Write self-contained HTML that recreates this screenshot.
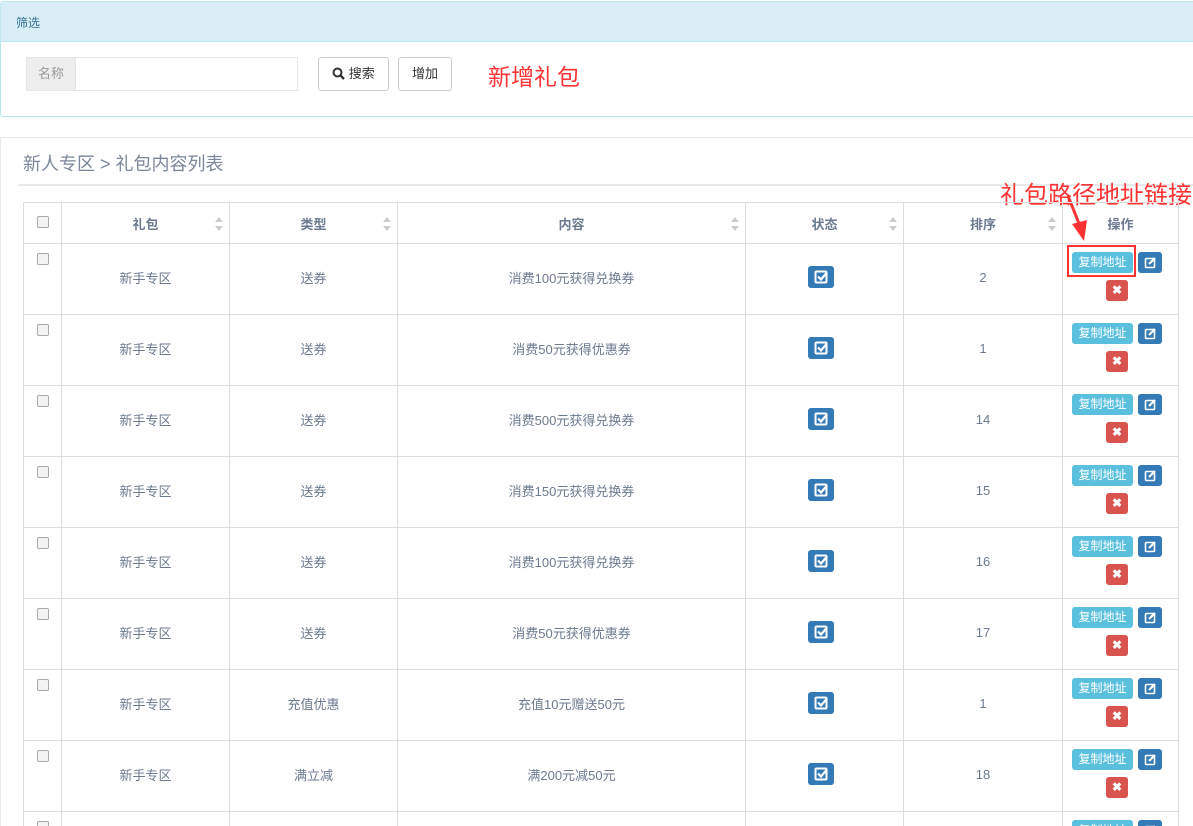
<!DOCTYPE html>
<html style="overflow:hidden;height:826px"><head><meta charset="utf-8"><style>
*{box-sizing:border-box;margin:0;padding:0}
body{width:1193px;height:826px;overflow:hidden;background:#fff;font-family:"Liberation Sans","Noto Sans CJK SC",sans-serif;font-size:13px;color:#676a6c;position:relative}
.p1{position:absolute;left:0;top:1px;width:1200px;height:116px;border:1px solid #bce8f1;border-radius:3px}
.p1 .h{height:40px;background:#d9edf7;border-bottom:1px solid #bce8f1;color:#31708f;font-size:12px;padding:12px 15px}
.grp{position:absolute;left:26px;top:57px;width:272px;height:34px;border:1px solid #e5e6e7;display:flex}
.grp span{width:49px;background:#eee;color:#999;font-size:13px;line-height:32px;text-align:center;border-right:1px solid #e5e6e7}
.btn{position:absolute;top:57px;height:34px;border:1px solid #ccc;border-radius:3px;background:#fff;color:#333;font-size:13px;line-height:32px;text-align:center}
.red{position:absolute;color:#f33;font-size:23px;white-space:nowrap}
.p2{position:absolute;left:0;top:137px;width:1200px;height:700px;border-top:1px solid #e7eaec;border-left:1px solid #e7eaec}
.title{position:absolute;left:23px;top:150px;font-size:18px;color:#7a8699}
.hr{position:absolute;left:18px;top:184px;width:1180px;height:2px;background:#e7eaec}
table{position:absolute;left:23px;top:202px;border-collapse:collapse;table-layout:fixed;width:1155px}
td,th{border:1px solid #ddd;text-align:center;color:#6b7a8f;font-size:13px;position:relative}
th{height:41px;font-weight:bold}
td{height:71px;padding-bottom:4px}
.cb{display:inline-block;width:12px;height:12px;border:1px solid #aaa;border-radius:2px;background:#f4f4f4;position:absolute;left:13px;top:9px}
th .cb{top:13px}
.sort{position:absolute;right:6px;top:14px;width:8px;height:14px}
.sort:before,.sort:after{content:"";position:absolute;left:0;border-left:4px solid transparent;border-right:4px solid transparent}
.sort:before{top:0;border-bottom:5px solid #ccc}.sort:after{bottom:0;border-top:5px solid #ccc}
.st{display:inline-block;width:26px;height:22px;background:#337ab7;border-radius:3px;vertical-align:middle;margin-left:-8px}
.ops{position:absolute;left:0;top:0;width:100%;height:100%}
.cp{position:absolute;left:9px;top:8px;width:61px;height:21px;background:#5bc0de;color:#fff;border-radius:3px;font-size:12px;line-height:21px}
.ed{position:absolute;left:75px;top:8px;width:24px;height:21px;background:#337ab7;border-radius:3px}
.dl{position:absolute;left:43px;top:36px;width:22px;height:21px;background:#d9534f;border-radius:3px;color:#fff;font-size:12px;font-weight:bold;line-height:21px}
</style></head><body>
<svg width="0" height="0" style="position:absolute"><defs>
<symbol id="ck" viewBox="0 0 26 22"><rect x="7.5" y="5.5" width="11" height="11" rx="1" fill="none" stroke="#fff" stroke-width="2"/><path d="M10 10.5l3 3 6-7" fill="none" stroke="#fff" stroke-width="2.2"/></symbol>
<symbol id="pe" viewBox="0 0 24 21"><rect x="7.5" y="6.5" width="9" height="9" rx="1" fill="none" stroke="#fff" stroke-width="1.6"/><path d="M11 12l6-6" stroke="#fff" stroke-width="2.2"/></symbol>
</defs></svg>
<div class="p1"><div class="h">筛选</div></div>
<div class="grp"><span>名称</span></div>
<div class="btn" style="left:318px;width:71px"><svg width="13" height="13" viewBox="0 0 13 13" style="vertical-align:-2px"><circle cx="5.5" cy="5.5" r="4" fill="none" stroke="#333" stroke-width="2"/><path d="M8.5 8.5l3.5 3.5" stroke="#333" stroke-width="2.4"/></svg> 搜索</div>
<div class="btn" style="left:398px;width:54px">增加</div>
<div class="red" style="left:488px;top:58px">新增礼包</div>
<div class="p2"></div>
<div class="title">新人专区 &gt; 礼包内容列表</div>
<div class="hr"></div>
<div class="red" style="left:1000px;top:175px;font-size:24px">礼包路径地址链接</div>
<svg style="position:absolute;left:1060px;top:194px" width="30" height="50"><line x1="8" y1="2" x2="20" y2="32" stroke="#f33" stroke-width="3"/><polygon points="12,30 27,26 24,47" fill="#f33"/></svg>
<table>
<colgroup><col style="width:38px"><col style="width:168px"><col style="width:168px"><col style="width:348px"><col style="width:158px"><col style="width:159px"><col style="width:116px"></colgroup>
<tr><th><span class="cb"></span></th><th>礼包<i class="sort"></i></th><th>类型<i class="sort"></i></th><th>内容<i class="sort"></i></th><th>状态<i class="sort"></i></th><th>排序<i class="sort"></i></th><th>操作</th></tr>
<tr><td><span class="cb"></span></td><td>新手专区</td><td>送券</td><td>消费100元获得兑换券</td><td><svg class="st"><use href="#ck"/></svg></td><td>2</td><td><div class="ops"><div style="position:absolute;left:4px;top:1px;width:69px;height:32px;border:2px solid #f33"></div><div class="cp">复制地址</div><svg class="ed"><use href="#pe"/></svg><div class="dl">✖</div></div></td></tr>
<tr><td><span class="cb"></span></td><td>新手专区</td><td>送券</td><td>消费50元获得优惠券</td><td><svg class="st"><use href="#ck"/></svg></td><td>1</td><td><div class="ops"><div class="cp">复制地址</div><svg class="ed"><use href="#pe"/></svg><div class="dl">✖</div></div></td></tr>
<tr><td><span class="cb"></span></td><td>新手专区</td><td>送券</td><td>消费500元获得兑换券</td><td><svg class="st"><use href="#ck"/></svg></td><td>14</td><td><div class="ops"><div class="cp">复制地址</div><svg class="ed"><use href="#pe"/></svg><div class="dl">✖</div></div></td></tr>
<tr><td><span class="cb"></span></td><td>新手专区</td><td>送券</td><td>消费150元获得兑换券</td><td><svg class="st"><use href="#ck"/></svg></td><td>15</td><td><div class="ops"><div class="cp">复制地址</div><svg class="ed"><use href="#pe"/></svg><div class="dl">✖</div></div></td></tr>
<tr><td><span class="cb"></span></td><td>新手专区</td><td>送券</td><td>消费100元获得兑换券</td><td><svg class="st"><use href="#ck"/></svg></td><td>16</td><td><div class="ops"><div class="cp">复制地址</div><svg class="ed"><use href="#pe"/></svg><div class="dl">✖</div></div></td></tr>
<tr><td><span class="cb"></span></td><td>新手专区</td><td>送券</td><td>消费50元获得优惠券</td><td><svg class="st"><use href="#ck"/></svg></td><td>17</td><td><div class="ops"><div class="cp">复制地址</div><svg class="ed"><use href="#pe"/></svg><div class="dl">✖</div></div></td></tr>
<tr><td><span class="cb"></span></td><td>新手专区</td><td>充值优惠</td><td>充值10元赠送50元</td><td><svg class="st"><use href="#ck"/></svg></td><td>1</td><td><div class="ops"><div class="cp">复制地址</div><svg class="ed"><use href="#pe"/></svg><div class="dl">✖</div></div></td></tr>
<tr><td><span class="cb"></span></td><td>新手专区</td><td>满立减</td><td>满200元减50元</td><td><svg class="st"><use href="#ck"/></svg></td><td>18</td><td><div class="ops"><div class="cp">复制地址</div><svg class="ed"><use href="#pe"/></svg><div class="dl">✖</div></div></td></tr>
<tr><td><span class="cb"></span></td><td></td><td></td><td></td><td></td><td></td><td><div class="ops"><div class="cp">复制地址</div><svg class="ed"><use href="#pe"/></svg></div></td></tr>
</table>
</body></html>
